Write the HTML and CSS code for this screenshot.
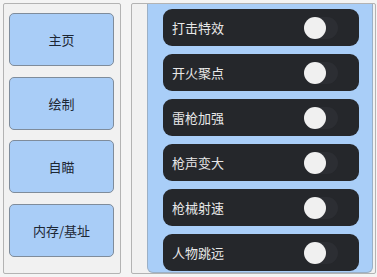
FILE: index.html
```html
<!DOCTYPE html>
<html lang="zh">
<head>
<meta charset="utf-8">
<link rel="stylesheet" href="styles.css">
</head>
<body>
<div class="app">
  <nav class="side">
    <div class="nav-btn">主页</div>
    <div class="nav-btn">绘制</div>
    <div class="nav-btn">自瞄</div>
    <div class="nav-btn">内存/基址</div>
  </nav>
  <main class="content">
    <div class="list">
      <div class="row"><span class="label">打击特效</span><span class="switch"><span class="knob"></span></span></div>
      <div class="row"><span class="label">开火聚点</span><span class="switch"><span class="knob"></span></span></div>
      <div class="row"><span class="label">雷枪加强</span><span class="switch"><span class="knob"></span></span></div>
      <div class="row"><span class="label">枪声变大</span><span class="switch"><span class="knob"></span></span></div>
      <div class="row"><span class="label">枪械射速</span><span class="switch"><span class="knob"></span></span></div>
      <div class="row"><span class="label">人物跳远</span><span class="switch"><span class="knob"></span></span></div>
    </div>
  </main>
</div>
</body>
</html>
```
FILE: styles.css
```css
html, body {
  margin: 0;
  padding: 0;
  background: #f4f4f4;
  font-family: "Noto Sans CJK SC", "Noto Sans", sans-serif;
}
.app {
  display: flex;
  gap: 10px;
  padding: 3px 1px 0 3px;
  height: 277px;
  box-sizing: border-box;
}
.side {
  width: 118px;
  height: 271px;
  box-sizing: border-box;
  border: 1px solid #b3b3b3;
  border-radius: 2px;
  background: #f1f1f1;
  padding: 9px 6px 0 5px;
  display: flex;
  flex-direction: column;
  gap: 10.5px;
}
.nav-btn {
  height: 53px;
  box-sizing: border-box;
  border: 1px solid #7f8c9b;
  border-radius: 5px;
  background: #a9cdf7;
  color: #1d2734;
  font-size: 13px;
  display: flex;
  align-items: center;
  justify-content: center;
}
.content {
  width: 245px;
  height: 271px;
  box-sizing: border-box;
  border: 1px solid #b3b3b3;
  border-radius: 2px;
  background: #f1f1f1;
  padding: 0 2px 0 15px;
  overflow: hidden;
}
.list {
  height: 269px;
  box-sizing: border-box;
  background: #a9cef8;
  border: 1px solid #9bb0c6;
  border-top: none;
  border-radius: 0 0 6px 6px;
  padding: 5px 13px 0 15px;
  display: flex;
  flex-direction: column;
  gap: 8px;
}
.row {
  flex: none;
  height: 37px;
  border-radius: 9px;
  background: #25272b;
  display: flex;
  align-items: center;
  padding: 0 21px 0 9px;
}
.label {
  flex: 1;
  color: #e8e8e8;
  font-size: 13px;
}
.switch {
  width: 34px;
  height: 22px;
  border-radius: 11px;
  background: #2c2e33;
  display: flex;
  align-items: center;
}
.knob {
  width: 22px;
  height: 22px;
  border-radius: 50%;
  background: #f0f0f0;
}
```
